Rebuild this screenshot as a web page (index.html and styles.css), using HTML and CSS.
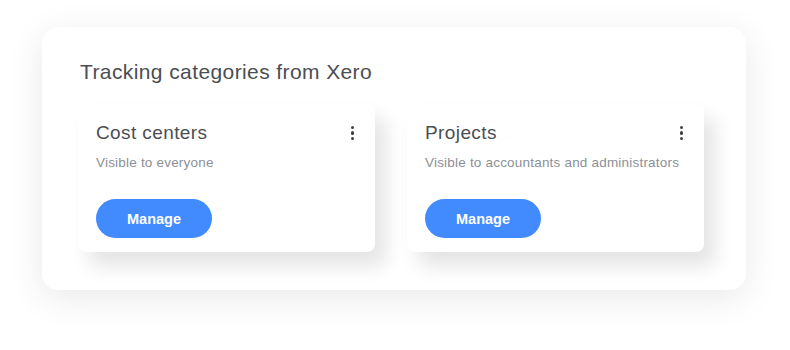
FILE: index.html
```html
<!DOCTYPE html>
<html lang="en">
<head>
    <meta charset="UTF-8">
    <meta name="viewport" content="width=device-width, initial-scale=1.0">
    <title>Tracking categories</title>
    <link rel="stylesheet" href="styles.css">
</head>
<body>
    <div class="panel">
        <h2 class="panel-title">Tracking categories from Xero</h2>

        <div class="cards">
            <div class="card">
                <div class="card-head">
                    <h3 class="card-title">Cost centers</h3>
                    <span class="kebab"><i></i><i></i><i></i></span>
                </div>
                <p class="card-sub">Visible to everyone</p>
                <button class="manage">Manage</button>
            </div>

            <div class="card">
                <div class="card-head">
                    <h3 class="card-title">Projects</h3>
                    <span class="kebab"><i></i><i></i><i></i></span>
                </div>
                <p class="card-sub">Visible to accountants and administrators</p>
                <button class="manage">Manage</button>
            </div>
        </div>
    </div>
</body>
</html>
```

FILE: styles.css
```css
body {
    margin: 0;
    padding: 27px 0 60px 42px;
    min-height: 100vh;
    box-sizing: border-box;
    background-color: #fff;
    font-family: "Liberation Sans", Arial, sans-serif;
    color: #4b4e53;
}

.panel {
    width: 704px;
    height: 263px;
    box-sizing: border-box;
    padding: 33px 36px 0 36px;
    background-color: #fff;
    border-radius: 16px;
    box-shadow: 0 8px 36px rgba(0, 0, 0, 0.09);
}

.panel-title {
    margin: 0 0 0 2px;
    font-size: 21px;
    font-weight: normal;
    line-height: 24px;
    letter-spacing: 0.4px;
    color: #4b4e53;
}

.cards {
    display: flex;
    gap: 32px;
    margin-top: 20px;
}

.card {
    width: 297px;
    height: 148px;
    box-sizing: border-box;
    padding: 18px 18px 0 18px;
    background-color: #fff;
    border-radius: 8px;
    box-shadow: 11px 14px 20px rgba(0, 0, 0, 0.11);
}

.card-head {
    display: flex;
    justify-content: space-between;
    align-items: center;
}

.card-title {
    margin: 0;
    font-size: 19px;
    font-weight: normal;
    line-height: 22px;
    letter-spacing: 0.4px;
    color: #4b4e53;
}

.kebab {
    display: flex;
    flex-direction: column;
    gap: 2px;
    margin-right: 3px;
}

.kebab i {
    display: block;
    width: 3.5px;
    height: 3.5px;
    border-radius: 50%;
    background-color: #3d4045;
}

.card-sub {
    margin: 11px 0 0 0;
    font-size: 13.5px;
    line-height: 16px;
    letter-spacing: 0.2px;
    color: #8c9097;
}

.manage {
    display: block;
    margin-top: 28px;
    width: 116px;
    height: 39px;
    border: none;
    border-radius: 20px;
    background-color: #418bff;
    color: #fff;
    font-family: "Liberation Sans", Arial, sans-serif;
    font-size: 14.5px;
    font-weight: bold;
    cursor: pointer;
}
```
